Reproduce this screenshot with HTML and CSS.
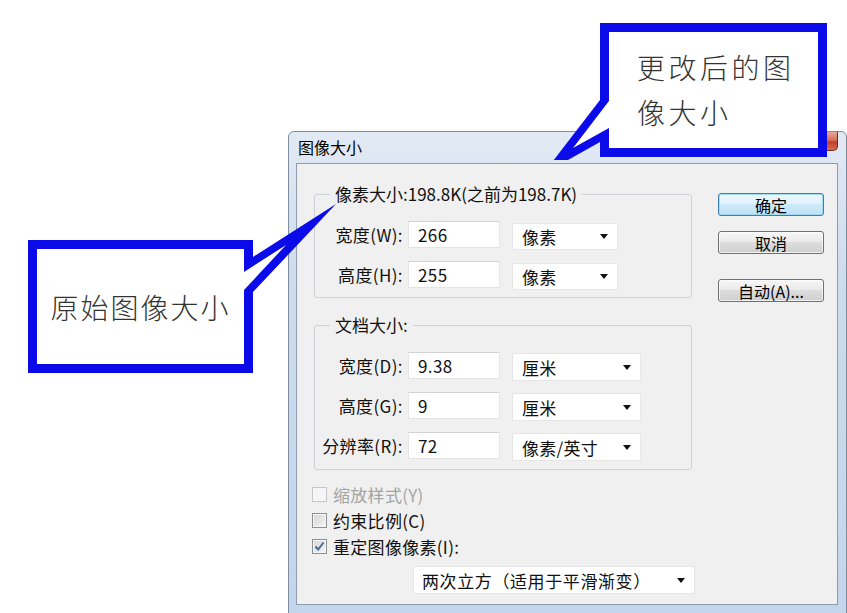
FILE: index.html
```html
<!DOCTYPE html>
<html lang="zh-CN">
<head>
  <meta charset="UTF-8">
  <title>图像大小</title>
  <link rel="stylesheet" href="styles.css">
</head>
<body>
  <div class="stage">
    <div class="window">
      <div class="titlebar">
        <span class="title">图像大小</span>
        <span class="close"></span>
      </div>
      <div class="client">
        <div class="main">
          <fieldset class="group">
            <legend>像素大小:198.8K(之前为198.7K)</legend>
            <div class="row">
              <label>宽度(W):</label>
              <span class="field">266</span>
              <span class="select">像素</span>
            </div>
            <div class="row">
              <label>高度(H):</label>
              <span class="field">255</span>
              <span class="select">像素</span>
            </div>
          </fieldset>

          <fieldset class="group group-doc">
            <legend>文档大小:</legend>
            <div class="row">
              <label>宽度(D):</label>
              <span class="field">9.38</span>
              <span class="select">厘米</span>
            </div>
            <div class="row">
              <label>高度(G):</label>
              <span class="field">9</span>
              <span class="select">厘米</span>
            </div>
            <div class="row">
              <label>分辨率(R):</label>
              <span class="field">72</span>
              <span class="select">像素/英寸</span>
            </div>
          </fieldset>

          <div class="checks">
            <div class="check disabled"><span class="box"></span>缩放样式(Y)</div>
            <div class="check"><span class="box"></span>约束比例(C)</div>
            <div class="check">
              <span class="box">
                <svg width="13" height="13" viewBox="0 0 13 13"><path d="M2.5 6.5 L5.2 9.5 L10.5 2.5" /></svg>
              </span>重定图像像素(I):
            </div>
          </div>
          <span class="select select-wide">两次立方（适用于平滑渐变）</span>
        </div>

        <div class="buttons">
          <button class="btn default">确定</button>
          <button class="btn">取消</button>
          <button class="btn btn-auto">自动(A)...</button>
        </div>
      </div>
    </div>

    <div class="callout callout-left">
      <svg width="310" height="175" viewBox="28 200 310 175">
        <polygon class="edge" points="28,240 253,240 253,257 336,204 253,292 253,373 28,373" />
        <polygon class="inside" points="37,249 244,249 244,272 286,245 244,290 244,364 37,364" />
      </svg>
      <div class="callout-text">原始图像大小</div>
    </div>

    <div class="callout callout-right">
      <svg width="290" height="140" viewBox="540 20 290 140">
        <polygon class="edge" points="600,23 827,23 827,157 600,157 600,142 543,174 600,100" />
        <polygon class="inside" points="609,32 818,32 818,148 609,148 609,128 573,148 609,101" />
      </svg>
      <div class="callout-text">更改后的图<br>像大小</div>
    </div>
  </div>
</body>
</html>
```

FILE: styles.css
```css
body {
  margin: 0;
  background: #fff;
  font-family: "Noto Sans CJK SC", "Microsoft YaHei", sans-serif;
  font-size: 17px;
  color: #111;
}
.stage {
  position: relative;
  width: 847px;
  height: 613px;
  overflow: hidden;
}

/* dialog window */
.window {
  box-sizing: border-box;
  width: 559px;
  height: 483px;
  margin: 131px 0 0 288px;
  border: 1px solid #7d8c9e;
  border-radius: 6px 6px 0 0;
  background: linear-gradient(to bottom, #e2eaf4, #cddcee 30%, #c4d6eb);
}
.titlebar {
  display: flex;
  justify-content: space-between;
  height: 31px;
  padding-left: 9px;
}
.title {
  font-size: 16px;
  line-height: 31px;
  color: #000;
}
.close {
  width: 45px;
  height: 19px;
  margin-right: 8px;
  box-sizing: border-box;
  border: 1px solid #6b2b20;
  border-top: none;
  border-radius: 0 0 5px 5px;
  background: linear-gradient(to bottom, #e9a896, #d3705b 45%, #c0402a 55%, #d46a4f);
}
.client {
  box-sizing: border-box;
  height: 442px;
  margin: 0 8px 0 7px;
  border: 1px solid #8d9bad;
  background: #f0f0f0;
  display: flex;
}
.main {
  box-sizing: border-box;
  width: 400px;
  padding: 20px 0 0 15px;
}

/* group boxes */
.group {
  box-sizing: border-box;
  width: 378px;
  margin: 0 0 0 2px;
  padding: 17px 0 9px 0;
  border: 1px solid #cdd1d6;
  border-radius: 3px;
}
.group legend {
  margin-left: 15px;
  padding: 0 5px;
  line-height: 20px;
}
.group-doc {
  margin-top: 17px;
  padding-bottom: 10px;
}
.row {
  display: flex;
  align-items: flex-start;
  height: 27px;
  letter-spacing: 0.4px;
}
.row + .row { margin-top: 13px; }
.row label {
  width: 88px;
  text-align: right;
  line-height: 27px;
  white-space: nowrap;
}
.field {
  box-sizing: border-box;
  width: 92px;
  height: 27px;
  margin-left: 5px;
  padding-left: 9px;
  line-height: 25px;
  background: #fff;
  border: 1px solid #e4e4e4;
  border-top-color: #d2d2d2;
}
.select {
  box-sizing: border-box;
  display: flex;
  justify-content: space-between;
  align-items: center;
  width: 106px;
  height: 27px;
  margin: 2px 0 0 12px;
  padding: 0 9px;
  background: #fff;
  border: 1px solid #e6e6e6;
  letter-spacing: 0.3px;
  white-space: nowrap;
}
.select::after {
  content: "";
  border-left: 4.5px solid transparent;
  border-right: 4.5px solid transparent;
  border-top: 5px solid #111;
}
.group-doc .select {
  width: 129px;
  height: 28px;
  margin-top: 1px;
}
.select-wide {
  width: 282px;
  height: 28px;
  margin: 7px 0 0 101px;
  padding-left: 8px;
  letter-spacing: 0.6px;
}

/* check boxes */
.checks { margin-top: 11px; }
.check {
  display: flex;
  align-items: center;
  height: 26px;
  letter-spacing: 0.3px;
}
.box {
  box-sizing: border-box;
  width: 15px;
  height: 15px;
  margin-right: 6px;
  border: 1px solid #8e8f8f;
  background: linear-gradient(135deg, #d6d6d6, #f4f4f4);
  box-shadow: inset 0 0 0 1px #f7f7f7;
}
.box svg { display: block; }
.box path {
  fill: none;
  stroke: #4a6a99;
  stroke-width: 2;
}
.check.disabled { color: #a4a4a4; }
.check.disabled .box {
  border-color: #c6c6c6;
  background: #f5f5f5;
}

/* buttons */
.buttons {
  display: flex;
  flex-direction: column;
  width: 106px;
  margin-left: 21px;
  padding-top: 29px;
}
.btn {
  height: 23px;
  padding: 0;
  font-family: inherit;
  font-size: 16px;
  line-height: 20px;
  color: #000;
  border: 1px solid #707070;
  border-radius: 3px;
  background: linear-gradient(to bottom, #f6f6f6, #ebebeb 45%, #dddddd 50%, #cfcfcf);
  box-shadow: inset 0 0 0 1px rgba(255, 255, 255, 0.7);
}
.btn + .btn { margin-top: 15px; }
.btn.default {
  border-color: #3c7fb1;
  background: linear-gradient(to bottom, #eef7fd, #e1f2fc 45%, #cfeafb 50%, #bde0f5);
  box-shadow: inset 0 0 0 1px #9fdcf4;
}
.btn-auto { margin-top: 25px !important; }

/* callouts */
.callout {
  position: absolute;
  display: grid;
}
.callout svg,
.callout-text { grid-area: 1 / 1; }
.callout .edge { fill: #0b0bea; }
.callout .inside { fill: #fff; }
.callout-text {
  font-size: 28px;
  font-weight: 300;
  color: #333;
}
.callout-left {
  left: 28px;
  top: 200px;
  width: 310px;
  height: 175px;
}
.callout-left .callout-text {
  margin: 49px 94px 11px 9px;
  display: flex;
  align-items: center;
  justify-content: center;
  letter-spacing: 2px;
}
.callout-right {
  left: 540px;
  top: 20px;
  width: 290px;
  height: 140px;
}
.callout-right .callout-text {
  margin: 25px 0 0 97px;
  line-height: 45px;
  letter-spacing: 3.5px;
}
```
